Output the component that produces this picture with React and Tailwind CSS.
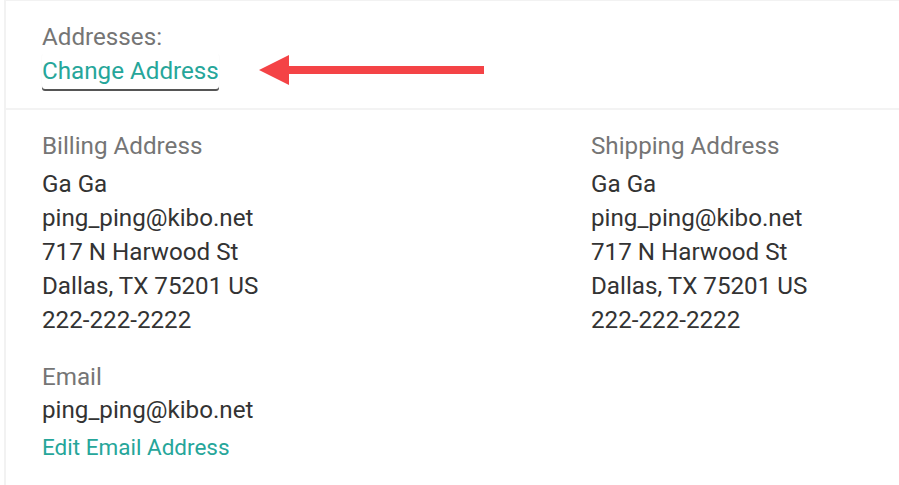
import React from 'react';

const address = ['Ga Ga', 'ping_ping@kibo.net', '717 N Harwood St', 'Dallas, TX 75201 US', '222-222-2222'];

function AddressBlock({ title }) {
  return (
    <div>
      <h3 className="text-[24.2px] leading-[32px] text-[#757575]">{title}</h3>
      <div className="mt-[5px] text-[24.2px] leading-[34px] text-[#333]">
        {address.map((line) => <div key={line}>{line}</div>)}
      </div>
    </div>
  );
}

export default function App() {
  return (
    <div className="h-[485px] bg-white font-['Roboto',sans-serif] border-t border-l-2 border-[#f2f2f2] ml-[4px]">
      {/* header */}
      <div className="border-b-2 border-[#f3f3f3] pl-[36px] pt-[20px] pb-[19px]">
        <div className="text-[24.2px] leading-[32px] text-[#757575]">Addresses:</div>
        <div className="flex items-center">
          <button className="rounded-[3px] text-[24.2px] leading-[36px] text-[#26a69a] shadow-[0_2px_0_#555,0_1px_1px_#ddd]">
            Change Address
          </button>
          <svg width="225" height="30" viewBox="0 0 225 30" className="ml-[40px] -mt-[2px]">
            <polygon points="0,15 30,0 30,11 225,11 225,19 30,19 30,30" fill="#f44346" />
          </svg>
        </div>
      </div>

      {/* body */}
      <div className="pl-[36px] pt-[20px]">
        <div className="grid grid-cols-[549px_1fr]">
          <AddressBlock title="Billing Address" />
          <AddressBlock title="Shipping Address" />
        </div>
        <div className="mt-[24px]">
          <h3 className="text-[24.2px] leading-[32px] text-[#757575]">Email</h3>
          <div className="text-[24.2px] leading-[34px] text-[#333]">ping_ping@kibo.net</div>
          <button className="text-[22.5px] leading-[40px] text-[#26a69a]">Edit Email Address</button>
        </div>
      </div>
    </div>
  );
}
